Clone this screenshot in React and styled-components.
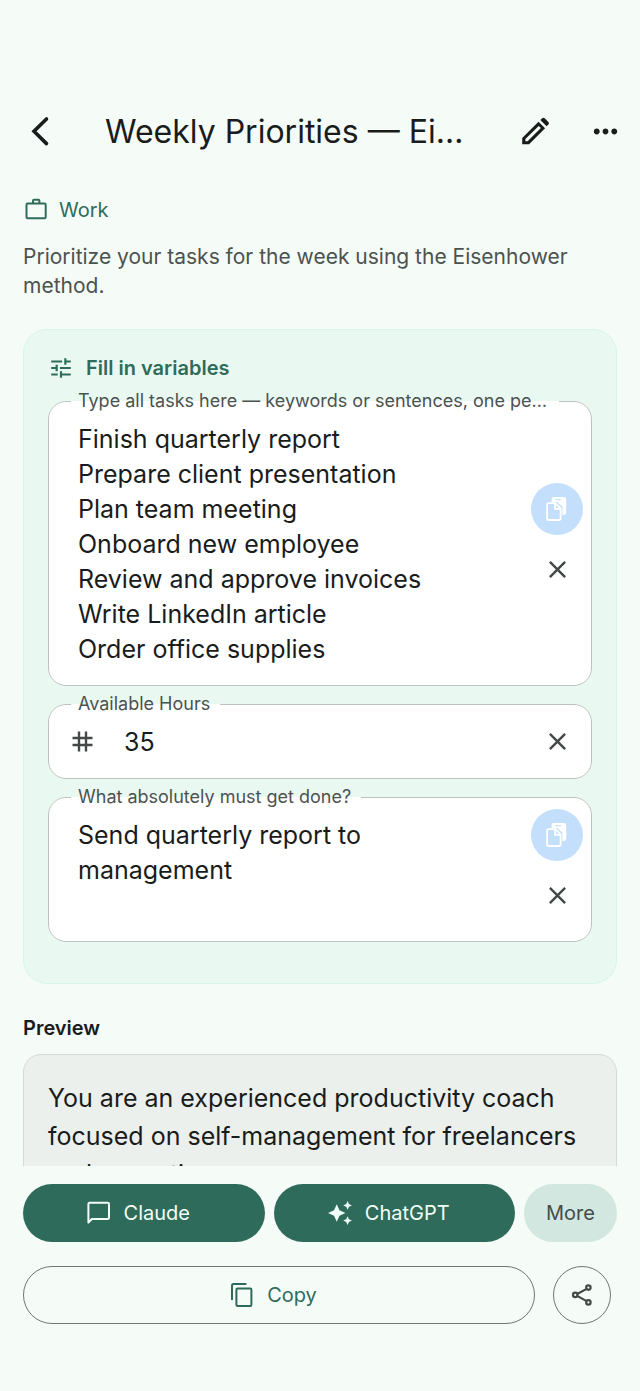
import React, { useState } from "react";
import styled, { createGlobalStyle } from "styled-components";
import {
  MdMoreHoriz,
  MdTune,
  MdClose,
  MdAutoAwesome,
} from "react-icons/md";

const TASKS = `Finish quarterly report
Prepare client presentation
Plan team meeting
Onboard new employee
Review and approve invoices
Write LinkedIn article
Order office supplies`;

const BackIcon = () => (
  <svg width="35" height="35" viewBox="0 0 35 35" fill="none" stroke="currentColor" strokeWidth="3.6">
    <path d="M23.5 5 11 17.3l12.5 12.3" strokeLinecap="round" strokeLinejoin="miter" />
  </svg>
);

const PencilIcon = () => (
  <svg width="35" height="35" viewBox="0 0 35 35" fill="currentColor">
    <path
      d="M4.2 30.2V24L20.5 7.7l6.6 6.6-16 15.9zM7.4 27.2h2.2L22.9 14.1l-2.2-2.2L7.4 25.1z"
      fillRule="evenodd"
    />
    <path d="M22.3 6l1.9-1.7q1.3-1.1 2.5 0l3.7 3.6q1.2 1.3 0 2.6l-1.8 1.8z" />
  </svg>
);

const BriefcaseIcon = () => (
  <svg width="24" height="24" viewBox="0 0 24 24" fill="none" stroke="currentColor" strokeWidth="2">
    <rect x="3.5" y="5.6" width="19.2" height="14.6" rx="1.2" />
    <path d="M10 5.6V2.8q0-1 1-1h4.4q1 0 1 1v2.8" />
  </svg>
);

const HashIcon = () => (
  <svg width="29" height="29" viewBox="0 0 29 29" fill="none" stroke="currentColor" strokeWidth="2.4">
    <path d="M11 4.5v20M18 4.5v20M4.5 11h20M4.5 18h20" />
  </svg>
);

const PasteIcon = () => (
  <svg width="28" height="28" viewBox="0 0 28 28">
    <path
      d="M10.5 2h10.3q2.4 0 2.4 2.4v13.2q0 2.4-2.4 2.4h-1.4v-8.2L14.2 7H8.6V3.9Q8.6 2 10.5 2z"
      fill="currentColor"
    />
    <path d="M12.5 4.6h5.4" stroke="#c4dffb" strokeWidth="1.2" />
    <path
      d="M5.9 8.2h6.5l5.2 5.2v9.8q0 1.8-1.8 1.8H5.9q-1.8 0-1.8-1.8V10q0-1.8 1.8-1.8zM12 8.4v5.4h5.5"
      fill="none"
      stroke="currentColor"
      strokeWidth="1.8"
      strokeLinejoin="round"
    />
  </svg>
);

const ChatIcon = () => (
  <svg width="26" height="26" viewBox="0 0 26 26" fill="none" stroke="currentColor" strokeWidth="2">
    <path d="M2.4 22.5V4.1q0-1.3 1.3-1.3h18q1.3 0 1.3 1.3v13.6q0 1.3-1.3 1.3H5.9z" strokeLinejoin="round" />
  </svg>
);

const CopyIcon = () => (
  <svg width="26" height="26" viewBox="0 0 26 26" fill="none" stroke="currentColor" strokeWidth="2">
    <path d="M3 18V3.6Q3 2 4.6 2H17.4" />
    <rect x="7.4" y="6.4" width="15" height="17.6" rx="1.2" />
  </svg>
);

const ShareIcon = () => (
  <svg width="26" height="26" viewBox="0 0 26 26" fill="none" stroke="currentColor" strokeWidth="2.2">
    <path d="M8.6 11.7l8.6-4.6M8.6 14.1l8.6 4.8" />
    <circle cx="6.2" cy="12.9" r="2.2" />
    <circle cx="19.4" cy="5.6" r="2.2" />
    <circle cx="19.4" cy="20.4" r="2.2" />
  </svg>
);

const Field = ({ id, label, children }) => (
  <FieldBox>
    <FieldLegend>
      <FieldLabel htmlFor={id}>{label}</FieldLabel>
    </FieldLegend>
    <FieldBody>{children}</FieldBody>
  </FieldBox>
);

const FieldActions = ({ name, canPaste, onClear }) => (
  <ActionColumn>
    {canPaste && (
      <PasteButton type="button" aria-label={`Paste into ${name}`}>
        <PasteIcon />
      </PasteButton>
    )}
    <ClearButton type="button" aria-label={`Clear ${name}`} onClick={onClear}>
      <MdClose />
    </ClearButton>
  </ActionColumn>
);

const App = () => {
  const [tasks, setTasks] = useState(TASKS);
  const [hours, setHours] = useState("35");
  const [mustDo, setMustDo] = useState("Send quarterly report to management");

  return (
    <>
      <GlobalStyle />
      <Screen>
        <Header>
          <HeaderButton type="button" aria-label="Back">
            <BackIcon />
          </HeaderButton>
          <Title>Weekly Priorities — Eisenhower Matrix</Title>
          <HeaderButton type="button" aria-label="Edit">
            <PencilIcon />
          </HeaderButton>
          <HeaderButton type="button" aria-label="More options">
            <MdMoreHoriz />
          </HeaderButton>
        </Header>

        <Content>
          <Category>
            <BriefcaseIcon />
            Work
          </Category>
          <Description>
            Prioritize your tasks for the week using the Eisenhower method.
          </Description>

          <VariablesCard>
            <CardTitle>
              <MdTune />
              Fill in variables
            </CardTitle>
            <Field
              id="tasks"
              label="Type all tasks here — keywords or sentences, one per line"
            >
              <TextArea
                id="tasks"
                rows={7}
                value={tasks}
                onChange={(e) => setTasks(e.target.value)}
              />
              <FieldActions name="tasks" canPaste onClear={() => setTasks("")} />
            </Field>
            <Field id="hours" label="Available Hours">
              <FieldPrefix>
                <HashIcon />
              </FieldPrefix>
              <NumberInput
                id="hours"
                inputMode="numeric"
                value={hours}
                onChange={(e) => setHours(e.target.value)}
              />
              <FieldActions name="hours" onClear={() => setHours("")} />
            </Field>
            <Field id="must" label="What absolutely must get done?">
              <TextArea
                id="must"
                rows={3}
                value={mustDo}
                onChange={(e) => setMustDo(e.target.value)}
              />
              <FieldActions
                name="must get done"
                canPaste
                onClear={() => setMustDo("")}
              />
            </Field>
          </VariablesCard>

          <PreviewTitle>Preview</PreviewTitle>
          <PreviewCard>
            You are an experienced productivity coach focused on self-management
            for freelancers and executives.
          </PreviewCard>
        </Content>

        <Footer>
          <ButtonRow>
            <OpenButton type="button">
              <ChatIcon />
              Claude
            </OpenButton>
            <OpenButton type="button">
              <MdAutoAwesome />
              ChatGPT
            </OpenButton>
            <MoreButton type="button">More</MoreButton>
          </ButtonRow>
          <ShareRow>
            <CopyButton type="button">
              <CopyIcon />
              Copy
            </CopyButton>
            <ShareButton type="button" aria-label="Share">
              <ShareIcon />
            </ShareButton>
          </ShareRow>
        </Footer>
      </Screen>
    </>
  );
};

export default App;

const GlobalStyle = createGlobalStyle`
  * {
    box-sizing: border-box;
  }

  body {
    margin: 0;
    background-color: #f5fbf7;
    color: #191c1b;
    font-family: Inter, "Liberation Sans", sans-serif;
  }

  button,
  input,
  textarea {
    font-family: inherit;
    color: inherit;
  }

  button {
    cursor: pointer;
  }

  svg {
    flex-shrink: 0;
  }
`;

const Screen = styled.div`
  display: flex;
  flex-direction: column;
  height: 100vh;
`;

const Header = styled.header`
  display: flex;
  align-items: center;
  padding: 96px 0 0 5px;
`;

const HeaderButton = styled.button`
  display: flex;
  align-items: center;
  justify-content: center;
  flex: none;
  width: 70px;
  height: 70px;
  padding: 0;
  border: none;
  background: none;

  svg {
    width: 35px;
    height: 35px;
  }
`;

const Title = styled.h1`
  flex: 1;
  min-width: 0;
  margin: 0 36px 0 30px;
  font-size: 32px;
  font-weight: 400;
  line-height: 45px;
  white-space: nowrap;
  overflow: hidden;
  text-overflow: ellipsis;
`;

const Content = styled.main`
  flex: 1;
  min-height: 0;
  padding: 30px 23px 0;
  overflow: hidden;
`;

const Category = styled.div`
  display: flex;
  align-items: center;
  gap: 12px;
  font-size: 20px;
  line-height: 28px;
  color: #2f6b5b;
`;

const Description = styled.p`
  margin: 18px 0 29px;
  font-size: 21px;
  line-height: 29px;
  color: #4c524f;
`;

const VariablesCard = styled.section`
  padding: 24px 24px 41px;
  border: 1px solid #d5f6e8;
  border-radius: 24px;
  background-color: #e9f9f2;
`;

const CardTitle = styled.h2`
  display: flex;
  align-items: center;
  gap: 12px;
  margin: 0 0 18px;
  font-size: 20px;
  font-weight: 600;
  line-height: 28px;
  color: #2f6b5b;

  svg {
    width: 26px;
    height: 26px;
  }
`;

const FieldBox = styled.fieldset`
  min-width: 0;
  margin: 0;
  padding: 0;
  border: 1px solid #bcc3bf;
  border-radius: 18px;
  background-color: #ffffff;

  & + & {
    margin-top: 17px;
  }
`;

const FieldLegend = styled.legend`
  display: flex;
  align-items: center;
  max-width: calc(100% - 54px);
  height: 2px;
  margin-left: 22px;
  padding: 0 10px 0 7px;
`;

const FieldLabel = styled.label`
  font-size: 18px;
  line-height: 24px;
  color: #4c524f;
  white-space: nowrap;
  overflow: hidden;
  text-overflow: ellipsis;
`;

const FieldBody = styled.div`
  display: flex;
  align-items: center;
`;

const TextArea = styled.textarea`
  flex: 1;
  min-width: 0;
  margin: 20px 0 18px;
  padding: 0 24px 0 29px;
  border: none;
  outline: none;
  background: none;
  resize: none;
  overflow: hidden;
  font-size: 25px;
  line-height: 35px;
`;

const NumberInput = styled.input`
  flex: 1;
  min-width: 0;
  height: 73px;
  padding: 0;
  border: none;
  outline: none;
  background: none;
  font-size: 25px;
`;

const FieldPrefix = styled.span`
  display: flex;
  padding: 0 27px 0 19px;
  color: #444947;
`;

const ActionColumn = styled.div`
  display: flex;
  flex-direction: column;
  align-items: center;
`;

const PasteButton = styled.button`
  display: flex;
  align-items: center;
  justify-content: center;
  width: 52px;
  height: 52px;
  padding: 0;
  border: none;
  border-radius: 50%;
  background-color: #c4dffb;
  color: #ffffff;
`;

const ClearButton = styled.button`
  display: flex;
  align-items: center;
  justify-content: center;
  width: 68px;
  height: 70px;
  padding: 0;
  border: none;
  background: none;
  color: #444947;

  svg {
    width: 29px;
    height: 29px;
  }
`;

const PreviewTitle = styled.h2`
  margin: 30px 0 12px;
  font-size: 20px;
  font-weight: 600;
  line-height: 28px;
`;

const PreviewCard = styled.div`
  padding: 24px;
  border: 1px solid #d5dad7;
  border-radius: 18px;
  background-color: #ecf0ed;
  font-size: 25px;
  line-height: 38px;
`;

const Footer = styled.footer`
  padding: 18px 23px 67px;
`;

const ButtonRow = styled.div`
  display: flex;
  gap: 9px;
`;

const PillButton = styled.button`
  display: flex;
  align-items: center;
  justify-content: center;
  gap: 12px;
  height: 58px;
  padding: 0;
  border: none;
  border-radius: 29px;
  font-size: 20px;
`;

const OpenButton = styled(PillButton)`
  flex: 1;
  padding-right: 12px;
  background-color: #2f6b5b;
  color: #f0fff8;

  svg {
    width: 26px;
    height: 26px;
  }
`;

const MoreButton = styled(PillButton)`
  width: 93px;
  background-color: #d2e7df;
  color: #444d49;
`;

const ShareRow = styled.div`
  display: flex;
  gap: 18px;
  margin-top: 24px;
  padding-right: 6px;
`;

const CopyButton = styled(PillButton)`
  flex: 1;
  padding-right: 12px;
  border: 1px solid #6f7673;
  background: none;
  color: #2f6b5b;
`;

const ShareButton = styled(PillButton)`
  width: 58px;
  border: 1px solid #6f7673;
  background: none;
  color: #444947;
`;
